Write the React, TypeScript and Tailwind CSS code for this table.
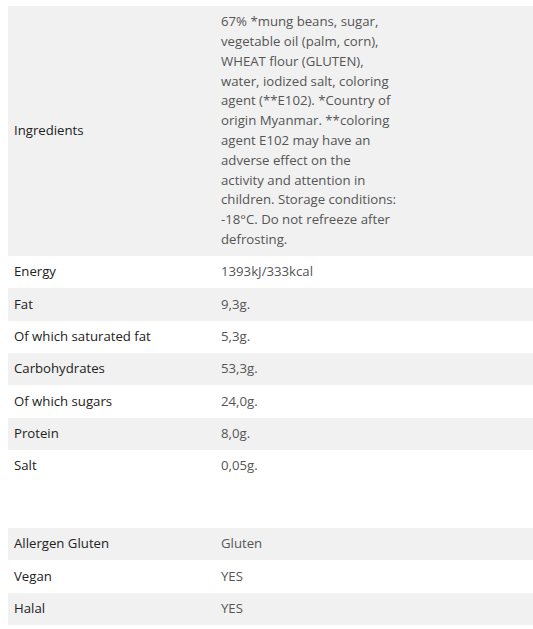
import React from 'react';

const ingredients = [
  '67% *mung beans, sugar,',
  'vegetable oil (palm, corn),',
  'WHEAT flour (GLUTEN),',
  'water, iodized salt, coloring',
  'agent (**E102). *Country of',
  'origin Myanmar. **coloring',
  'agent E102 may have an',
  'adverse effect on the',
  'activity and attention in',
  'children. Storage conditions:',
  '-18°C. Do not refreeze after',
  'defrosting.',
];

const nutrition: [string, string][] = [
  ['Energy', '1393kJ/333kcal'],
  ['Fat', '9,3g.'],
  ['Of which saturated fat', '5,3g.'],
  ['Carbohydrates', '53,3g.'],
  ['Of which sugars', '24,0g.'],
  ['Protein', '8,0g.'],
  ['Salt', '0,05g.'],
];

const extra: [string, string][] = [
  ['Allergen Gluten', 'Gluten'],
  ['Vegan', 'YES'],
  ['Halal', 'YES'],
];

// zebra rows, first one grey
const Row = ({ label, value, grey }: { label: string; value: React.ReactNode; grey: boolean }) => (
  <tr className={grey ? 'bg-[#f1f1f1]' : 'bg-white'}>
    <td className="w-[207px] px-[6px] py-[6.25px] align-middle text-[#222]">{label}</td>
    <td className="px-[6px] py-[6.25px] align-middle text-[#555]">{value}</td>
  </tr>
);

export default function App() {
  return (
    <div
      className="min-h-screen bg-white pl-[8px] pt-[6px] text-[13.2px] leading-[19.8px]"
      style={{ fontFamily: '"Open Sans", "DejaVu Sans", sans-serif' }}
    >
      <table className="w-full border-collapse">
        <tbody>
          <Row
            label="Ingredients"
            grey
            value={ingredients.map((line, i) => (
              <div key={i} className="whitespace-nowrap">
                {line}
              </div>
            ))}
          />
          {nutrition.map(([label, value], i) => (
            <Row key={label} label={label} value={value} grey={i % 2 === 1} />
          ))}
        </tbody>
      </table>

      <table className="mt-[46px] w-full border-collapse">
        <tbody>
          {extra.map(([label, value], i) => (
            <Row key={label} label={label} value={value} grey={i % 2 === 0} />
          ))}
        </tbody>
      </table>
    </div>
  );
}
